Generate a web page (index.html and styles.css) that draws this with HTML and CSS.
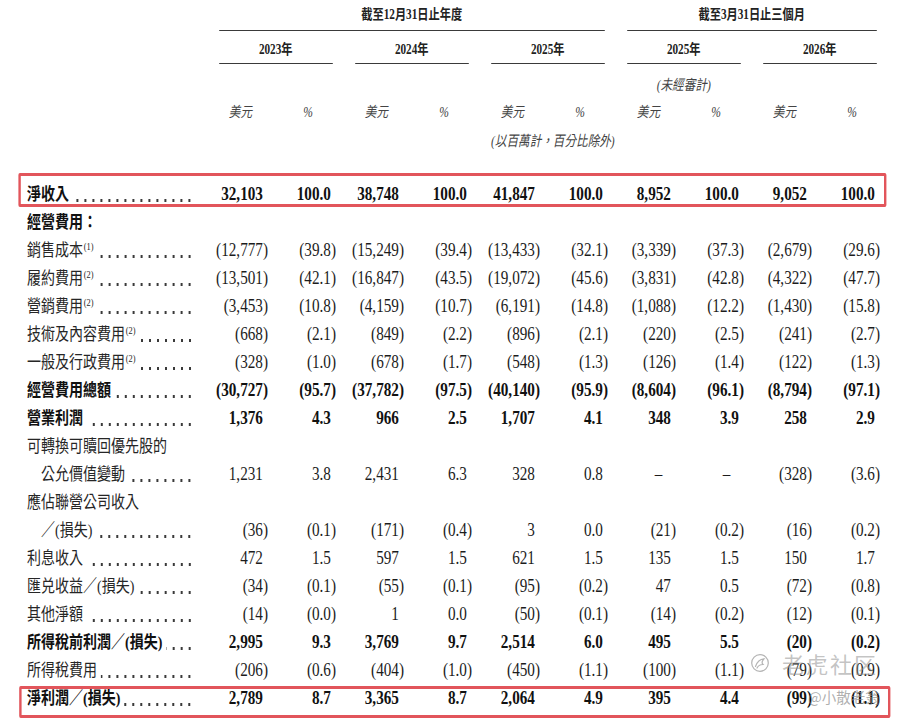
FILE: index.html
```html
<!DOCTYPE html>
<html lang="zh-Hant">
<head>
<meta charset="utf-8">
<title>經營業績</title>
<link rel="stylesheet" href="styles.css">
</head>
<body>
<div class="page">
  <div class="hrow hA">
    <div class="grp g1">截至12月31日止年度</div>
    <div class="grp g2">截至3月31日止三個月</div>
  </div>
  <div class="hrow hB">
    <div class="yr y1">2023年</div>
    <div class="yr y2">2024年</div>
    <div class="yr y3">2025年</div>
    <div class="yr y4">2025年</div>
    <div class="yr y5">2026年</div>
  </div>
  <div class="hrow hC">
    <div class="note unaud">(未經審計)</div>
  </div>
  <div class="hrow hD">
    <div></div>
    <div class="cu">美元</div><div class="cpct">%</div>
    <div class="cu">美元</div><div class="cpct">%</div>
    <div class="cu">美元</div><div class="cpct">%</div>
    <div class="cu">美元</div><div class="cpct">%</div>
    <div class="cu">美元</div><div class="cpct">%</div>
  </div>
  <div class="hrow hE">
    <div class="note mill">(以百萬計，百分比除外)</div>
  </div>

  <div class="body">
    <div class="row b box box1">
      <div class="lab"><span class="t">淨收入</span><span class="ld"></span></div>
      <div class="n p">32,103</div><div class="n p">100.0</div>
      <div class="n p">38,748</div><div class="n p">100.0</div>
      <div class="n p">41,847</div><div class="n p">100.0</div>
      <div class="n p">8,952</div><div class="n p">100.0</div>
      <div class="n p">9,052</div><div class="n p">100.0</div>
    </div>
    <div class="row b">
      <div class="lab"><span class="t">經營費用：</span></div>
    </div>
    <div class="row">
      <div class="lab"><span class="t">銷售成本<sup>(1)</sup></span><span class="ld"></span></div>
      <div class="n">(12,777)</div><div class="n">(39.8)</div>
      <div class="n">(15,249)</div><div class="n">(39.4)</div>
      <div class="n">(13,433)</div><div class="n">(32.1)</div>
      <div class="n">(3,339)</div><div class="n">(37.3)</div>
      <div class="n">(2,679)</div><div class="n">(29.6)</div>
    </div>
    <div class="row">
      <div class="lab"><span class="t">履約費用<sup>(2)</sup></span><span class="ld"></span></div>
      <div class="n">(13,501)</div><div class="n">(42.1)</div>
      <div class="n">(16,847)</div><div class="n">(43.5)</div>
      <div class="n">(19,072)</div><div class="n">(45.6)</div>
      <div class="n">(3,831)</div><div class="n">(42.8)</div>
      <div class="n">(4,322)</div><div class="n">(47.7)</div>
    </div>
    <div class="row">
      <div class="lab"><span class="t">營銷費用<sup>(2)</sup></span><span class="ld"></span></div>
      <div class="n">(3,453)</div><div class="n">(10.8)</div>
      <div class="n">(4,159)</div><div class="n">(10.7)</div>
      <div class="n">(6,191)</div><div class="n">(14.8)</div>
      <div class="n">(1,088)</div><div class="n">(12.2)</div>
      <div class="n">(1,430)</div><div class="n">(15.8)</div>
    </div>
    <div class="row">
      <div class="lab"><span class="t">技術及內容費用<sup>(2)</sup></span><span class="ld"></span></div>
      <div class="n">(668)</div><div class="n">(2.1)</div>
      <div class="n">(849)</div><div class="n">(2.2)</div>
      <div class="n">(896)</div><div class="n">(2.1)</div>
      <div class="n">(220)</div><div class="n">(2.5)</div>
      <div class="n">(241)</div><div class="n">(2.7)</div>
    </div>
    <div class="row">
      <div class="lab"><span class="t">一般及行政費用<sup>(2)</sup></span><span class="ld"></span></div>
      <div class="n">(328)</div><div class="n">(1.0)</div>
      <div class="n">(678)</div><div class="n">(1.7)</div>
      <div class="n">(548)</div><div class="n">(1.3)</div>
      <div class="n">(126)</div><div class="n">(1.4)</div>
      <div class="n">(122)</div><div class="n">(1.3)</div>
    </div>
    <div class="row b">
      <div class="lab"><span class="t">經營費用總額</span><span class="ld"></span></div>
      <div class="n">(30,727)</div><div class="n">(95.7)</div>
      <div class="n">(37,782)</div><div class="n">(97.5)</div>
      <div class="n">(40,140)</div><div class="n">(95.9)</div>
      <div class="n">(8,604)</div><div class="n">(96.1)</div>
      <div class="n">(8,794)</div><div class="n">(97.1)</div>
    </div>
    <div class="row b">
      <div class="lab"><span class="t">營業利潤</span><span class="ld"></span></div>
      <div class="n p">1,376</div><div class="n p">4.3</div>
      <div class="n p">966</div><div class="n p">2.5</div>
      <div class="n p">1,707</div><div class="n p">4.1</div>
      <div class="n p">348</div><div class="n p">3.9</div>
      <div class="n p">258</div><div class="n p">2.9</div>
    </div>
    <div class="row">
      <div class="lab"><span class="t">可轉換可贖回優先股的</span></div>
    </div>
    <div class="row ind">
      <div class="lab"><span class="t">公允價值變動</span><span class="ld"></span></div>
      <div class="n p">1,231</div><div class="n p">3.8</div>
      <div class="n p">2,431</div><div class="n p">6.3</div>
      <div class="n p">328</div><div class="n p">0.8</div>
      <div class="n dash">–</div><div class="n dash">–</div>
      <div class="n">(328)</div><div class="n">(3.6)</div>
    </div>
    <div class="row">
      <div class="lab"><span class="t">應佔聯營公司收入</span></div>
    </div>
    <div class="row ind">
      <div class="lab"><span class="t">／(損失)</span><span class="ld"></span></div>
      <div class="n">(36)</div><div class="n">(0.1)</div>
      <div class="n">(171)</div><div class="n">(0.4)</div>
      <div class="n p">3</div><div class="n p">0.0</div>
      <div class="n">(21)</div><div class="n">(0.2)</div>
      <div class="n">(16)</div><div class="n">(0.2)</div>
    </div>
    <div class="row">
      <div class="lab"><span class="t">利息收入</span><span class="ld"></span></div>
      <div class="n p">472</div><div class="n p">1.5</div>
      <div class="n p">597</div><div class="n p">1.5</div>
      <div class="n p">621</div><div class="n p">1.5</div>
      <div class="n p">135</div><div class="n p">1.5</div>
      <div class="n p">150</div><div class="n p">1.7</div>
    </div>
    <div class="row">
      <div class="lab"><span class="t">匯兑收益／(損失)</span><span class="ld"></span></div>
      <div class="n">(34)</div><div class="n">(0.1)</div>
      <div class="n">(55)</div><div class="n">(0.1)</div>
      <div class="n">(95)</div><div class="n">(0.2)</div>
      <div class="n p">47</div><div class="n p">0.5</div>
      <div class="n">(72)</div><div class="n">(0.8)</div>
    </div>
    <div class="row">
      <div class="lab"><span class="t">其他淨額</span><span class="ld"></span></div>
      <div class="n">(14)</div><div class="n">(0.0)</div>
      <div class="n p">1</div><div class="n p">0.0</div>
      <div class="n">(50)</div><div class="n">(0.1)</div>
      <div class="n">(14)</div><div class="n">(0.2)</div>
      <div class="n">(12)</div><div class="n">(0.1)</div>
    </div>
    <div class="row b">
      <div class="lab"><span class="t">所得稅前利潤／(損失)</span><span class="ld"></span></div>
      <div class="n p">2,995</div><div class="n p">9.3</div>
      <div class="n p">3,769</div><div class="n p">9.7</div>
      <div class="n p">2,514</div><div class="n p">6.0</div>
      <div class="n p">495</div><div class="n p">5.5</div>
      <div class="n">(20)</div><div class="n">(0.2)</div>
    </div>
    <div class="row">
      <div class="lab"><span class="t">所得稅費用</span><span class="ld"></span></div>
      <div class="n">(206)</div><div class="n">(0.6)</div>
      <div class="n">(404)</div><div class="n">(1.0)</div>
      <div class="n">(450)</div><div class="n">(1.1)</div>
      <div class="n">(100)</div><div class="n">(1.1)</div>
      <div class="n">(79)</div><div class="n">(0.9)</div>
    </div>
    <div class="row b box box2">
      <div class="lab"><span class="t">淨利潤／(損失)</span><span class="ld"></span></div>
      <div class="n p">2,789</div><div class="n p">8.7</div>
      <div class="n p">3,365</div><div class="n p">8.7</div>
      <div class="n p">2,064</div><div class="n p">4.9</div>
      <div class="n p">395</div><div class="n p">4.4</div>
      <div class="n">(99)</div><div class="n">(1.1)</div>
    </div>
  </div>
</div>

<div class="wm">
  <svg class="wm-icon" width="20" height="20" viewBox="-10 -10 20 20" aria-hidden="true">
    <circle cx="0" cy="0" r="8.3" fill="none" stroke="#b4b4b4" stroke-width="1.2"/>
    <path d="M-4.5 3.5 C-3 -1 0 -4 4 -4.2 C2 -2 1.5 0 3 1.5 C0.5 1.5 -2 3 -3 5" fill="none" stroke="#b4b4b4" stroke-width="1.2" stroke-linecap="round"/>
  </svg>
  <span class="wm-text">老虎社区</span>
</div>
<div class="wm-user">@小散老翁</div>
</body>
</html>
```

FILE: styles.css
```css
html, body {
  margin: 0;
  padding: 0;
  background: #ffffff;
}
body {
  width: 900px;
  height: 721px;
  overflow: hidden;
  position: relative;
  color: #1a1a1a;
  font-family: "Liberation Serif", "Noto Sans CJK TC", serif;
}

/* the source page is a condensed print typeface: lay out wide, then compress */
.page {
  width: 1100px;
  transform: scaleX(0.8);
  transform-origin: 0 0;
}

.hrow, .row {
  display: grid;
  grid-template-columns: 250px repeat(10, 85px);
}

/* ---------- header ---------- */
.grp, .yr {
  font-family: "Liberation Serif", "Noto Sans CJK TC", serif;
  font-weight: 700;
  font-size: 14px;
  color: #222;
  text-align: center;
  border-bottom: 1px solid #3a3a3a;
  margin: 0 4.5px 0 23.75px;
  white-space: nowrap;
}
.grp {
  height: 30px;
  line-height: 30px;
}
.g1 { grid-column: 2 / 8; }
.g2 { grid-column: 8 / 12; }

.yr {
  height: 18px;
  line-height: 18px;
  padding: 10px 0 4px;
}
.y1 { grid-column: 2 / 4; }
.y2 { grid-column: 4 / 6; }
.y3 { grid-column: 6 / 8; }
.y4 { grid-column: 8 / 10; }
.y5 { grid-column: 10 / 12; }

.note {
  font-style: italic;
  font-size: 14.5px;
  color: #444;
  text-align: center;
  white-space: nowrap;
  margin: 0 4.5px 0 23.75px;
}
.unaud {
  grid-column: 8 / 10;
  padding: 12px 0 5px;
  line-height: 18px;
}
.mill {
  grid-column: 6 / 8;
  line-height: 32px;
}

.hD {
  line-height: 26px;
  font-size: 14.5px;
  font-style: italic;
  color: #444;
}
.cu {
  text-align: right;
  padding-right: 20px;
}
.cpct {
  text-align: right;
  padding-right: 29px;
}

/* ---------- body ---------- */
.body {
  margin-top: 23px;
}
.row {
  height: 28px;
  line-height: 28px;
}
.lab {
  display: flex;
  min-width: 0;
  padding: 0 8px 0 33.75px;
  white-space: nowrap;
  font-size: 17.5px;
  color: #262626;
}
.t {
  flex: none;
}
.ind .t {
  padding-left: 1em;
}
.t sup {
  font-size: 10.5px;
  line-height: 0;
  vertical-align: 6px;
  margin-left: 1px;
}
/* dotted leader */
.ld {
  flex: 1 1 auto;
  min-width: 0;
  margin-left: 5px;
  background-image: radial-gradient(circle at 5px 20.5px, #3a3a3a 0 1.25px, rgba(58, 58, 58, 0) 1.6px);
  background-size: 10px 28px;
  background-repeat: repeat-x;
  background-position: right top;
}
.n {
  font-family: "Liberation Serif", serif;
  font-size: 19px;
  text-align: right;
  color: #1c1c1c;
  white-space: nowrap;
}
.n.p {
  padding-right: 0.333em;
}
.n.dash {
  padding-right: 0.9em;
}
.b .lab, .b .n {
  font-weight: 700;
  color: #111;
}

/* red annotation boxes drawn over the rows */
.box {
  position: relative;
}
.box::after {
  content: "";
  position: absolute;
  border-style: solid;
  border-color: #e2555b;
  border-width: 3px 3.75px;
  border-radius: 2px;
  pointer-events: none;
}
.box1::after {
  left: 22.5px;
  right: -7.5px;
  top: -7px;
  bottom: 1px;
}
.box2::after {
  left: 23.75px;
  right: -12.5px;
  top: 2px;
  bottom: -6px;
}

/* ---------- watermark ---------- */
.wm {
  position: absolute;
  left: 750px;
  top: 651px;
  display: flex;
  align-items: center;
  gap: 12px;
}
.wm-icon {
  display: block;
}
.wm-text {
  font-family: "Noto Sans CJK SC", sans-serif;
  font-size: 22px;
  line-height: 24px;
  letter-spacing: 2px;
  color: rgba(145, 145, 145, 0.55);
}
.wm-user {
  position: absolute;
  left: 808px;
  top: 688px;
  font-family: "Noto Sans CJK SC", sans-serif;
  font-size: 14.5px;
  line-height: 18px;
  color: rgba(140, 140, 140, 0.7);
}
```
